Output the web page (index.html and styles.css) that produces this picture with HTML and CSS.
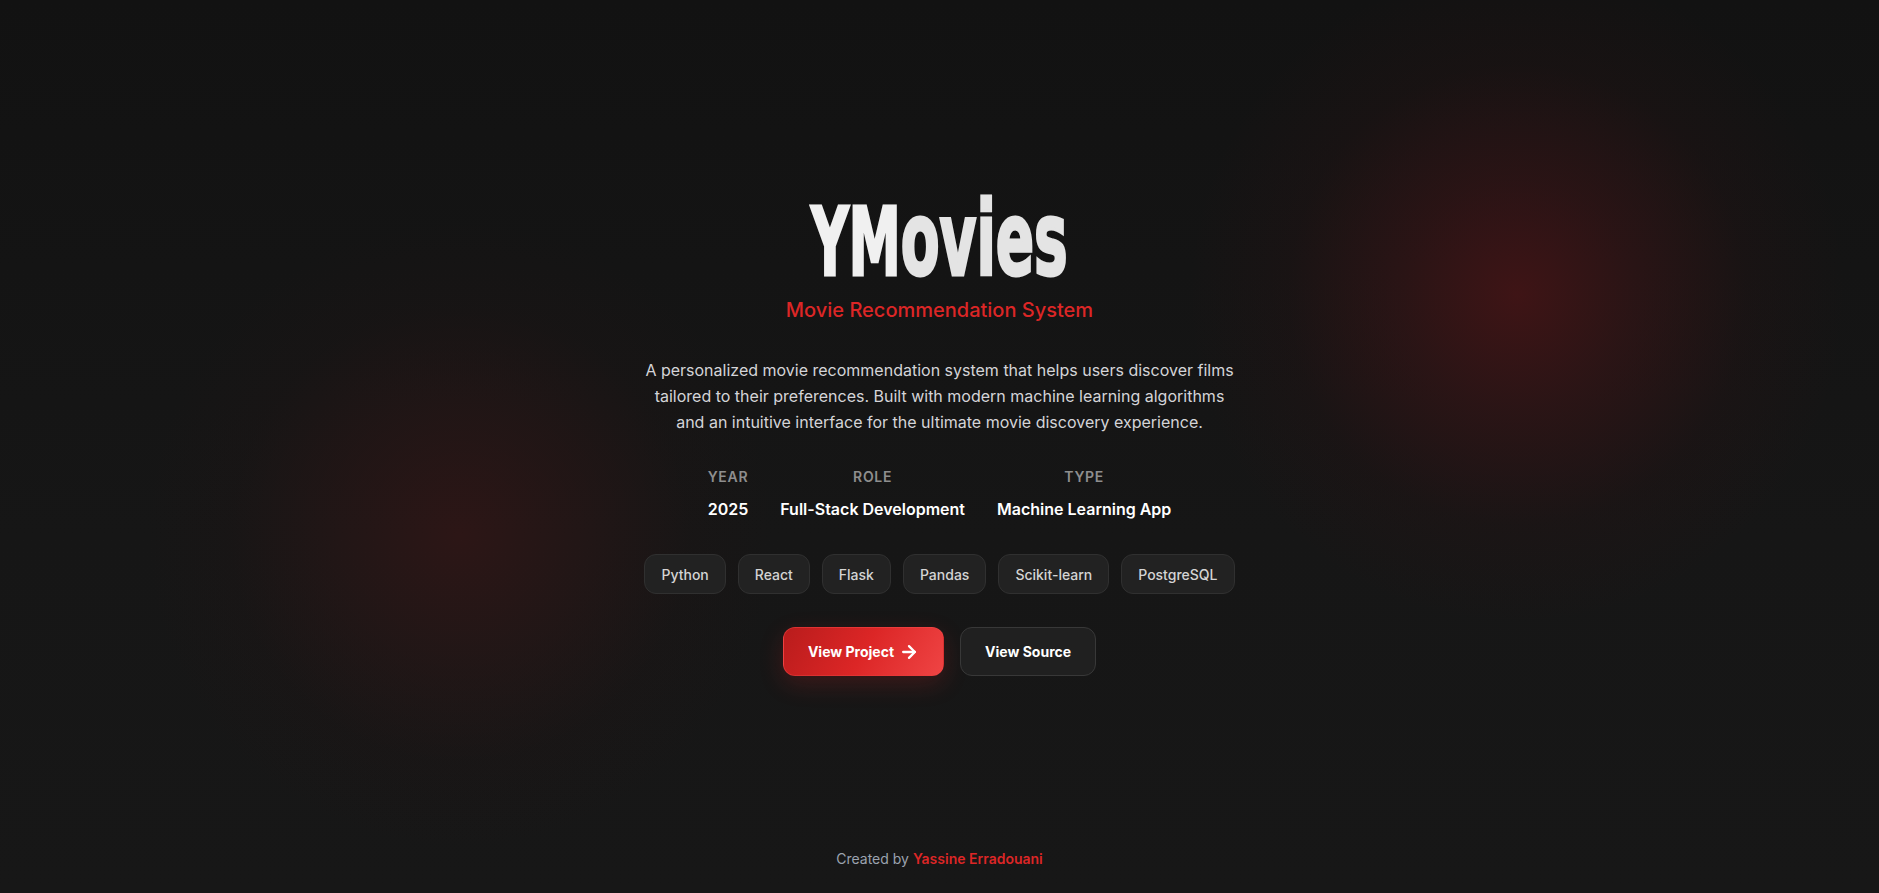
FILE: index.html
```html
<!DOCTYPE html>
<html lang="en">
<head>
<meta charset="utf-8">
<title>YMovies</title>
<link rel="stylesheet" href="styles.css">
</head>
<body>
<div class="glow glow-right"></div>
<div class="glow glow-left"></div>
<main class="hero">
  <h1 class="title"><span class="title-text">YM<span class="title-low">ovies</span></span></h1>
  <p class="subtitle">Movie Recommendation System</p>
  <p class="description">A personalized movie recommendation system that helps users discover films tailored to their preferences. Built with modern machine learning algorithms and an intuitive interface for the ultimate movie discovery experience.</p>
  <div class="meta">
    <div class="meta-item">
      <span class="meta-label">Year</span>
      <span class="meta-value">2025</span>
    </div>
    <div class="meta-item">
      <span class="meta-label">Role</span>
      <span class="meta-value">Full-Stack Development</span>
    </div>
    <div class="meta-item">
      <span class="meta-label">Type</span>
      <span class="meta-value">Machine Learning App</span>
    </div>
  </div>
  <ul class="tags">
    <li class="tag">Python</li>
    <li class="tag">React</li>
    <li class="tag">Flask</li>
    <li class="tag">Pandas</li>
    <li class="tag">Scikit-learn</li>
    <li class="tag">PostgreSQL</li>
  </ul>
  <div class="actions">
    <a class="btn btn-primary" href="#">View Project
      <svg class="btn-icon" viewBox="0 0 24 24" fill="none" stroke="currentColor" stroke-width="2.75" stroke-linecap="round" stroke-linejoin="round"><path d="M5 12h14"/><path d="m12 5 7 7-7 7"/></svg>
    </a>
    <a class="btn btn-secondary" href="#">View Source</a>
  </div>
</main>
<footer class="footer">Created by <span class="author">Yassine Erradouani</span></footer>
</body>
</html>
```

FILE: styles.css
```css
* { box-sizing: border-box; }
html, body { margin: 0; padding: 0; }
body {
  min-height: 100vh;
  display: flex;
  flex-direction: column;
  position: relative;
  overflow: hidden;
  font-family: "Inter", "Noto Sans", sans-serif;
  color: #e5e5e5;
  background: linear-gradient(180deg, #121212 0%, #161616 60%, #171717 100%);
}
.glow {
  position: absolute;
  border-radius: 50%;
  pointer-events: none;
}
.glow-right {
  left: 1192px;
  top: -30px;
  width: 650px;
  height: 650px;
  background: radial-gradient(circle at center, rgba(70, 20, 22, 0.85) 0%, rgba(60, 20, 22, 0.55) 25%, rgba(40, 18, 19, 0.25) 50%, rgba(30, 18, 18, 0) 72%);
}
.glow-left {
  left: 150px;
  top: 225px;
  width: 620px;
  height: 620px;
  background: radial-gradient(circle at center, rgba(50, 22, 22, 0.8) 0%, rgba(45, 22, 22, 0.5) 28%, rgba(32, 20, 20, 0.22) 52%, rgba(25, 18, 18, 0) 72%);
}
.hero {
  position: relative;
  flex: 1;
  display: flex;
  flex-direction: column;
  align-items: center;
  justify-content: center;
  padding-top: 43px;
  text-align: center;
}
.title {
  margin: 0;
  height: 95px;
  font-family: "DejaVu Sans", sans-serif;
  font-stretch: condensed;
  font-weight: 700;
  font-size: 95px;
  line-height: 95px;
  white-space: nowrap;
}
.title-text {
  display: inline-block;
  transform: scaleX(0.61);
  color: #f0f0f0;
  -webkit-text-stroke: 3px #f0f0f0;
}
.title-low {
  font-size: 103px;
  color: #e4e4e4;
  -webkit-text-stroke: 3px #e4e4e4;
}
.subtitle {
  margin: 9px 0 0;
  font-size: 20px;
  line-height: 28px;
  font-weight: 500;
  color: #dc2626;
}
.description {
  margin: 33px 0 0;
  max-width: 598px;
  font-size: 16px;
  line-height: 26px;
  color: #d4d4d8;
}
.meta {
  margin-top: 32px;
  display: flex;
  gap: 32px;
}
.meta-item {
  display: flex;
  flex-direction: column;
  align-items: center;
  gap: 10px;
}
.meta-label {
  font-size: 14px;
  line-height: 20px;
  font-weight: 600;
  letter-spacing: 0.05em;
  text-transform: uppercase;
  color: #8e8e8e;
}
.meta-value {
  font-size: 16px;
  line-height: 24px;
  font-weight: 600;
  color: #ffffff;
}
.tags {
  list-style: none;
  margin: 33px 0 0;
  padding: 0;
  display: flex;
  gap: 12px;
}
.tag {
  height: 40px;
  padding: 0 16px;
  display: flex;
  align-items: center;
  border: 1px solid #303030;
  border-radius: 12px;
  background: #222222;
  font-size: 14px;
  font-weight: 500;
  color: #d4d4d4;
}
.actions {
  margin-top: 33px;
  display: flex;
  gap: 16px;
}
.btn {
  height: 49px;
  padding: 0 24px;
  display: inline-flex;
  align-items: center;
  gap: 5px;
  border-radius: 12px;
  font-size: 14px;
  font-weight: 700;
  color: #ffffff;
  text-decoration: none;
}
.btn-primary {
  background: linear-gradient(120deg, #b91c1c 0%, #dc2626 50%, #ef4444 100%);
  border: 1px solid rgba(239, 68, 68, 0.5);
  box-shadow: 0 8px 24px rgba(220, 38, 38, 0.2);
}
.btn-icon {
  width: 20px;
  height: 20px;
}
.btn-secondary {
  background: #202020;
  border: 1px solid #383838;
}
.footer {
  position: relative;
  padding: 24px 0;
  text-align: center;
  font-size: 14px;
  line-height: 20px;
  color: #9ca3af;
}
.author {
  color: #dc2626;
  font-weight: 600;
}
```
